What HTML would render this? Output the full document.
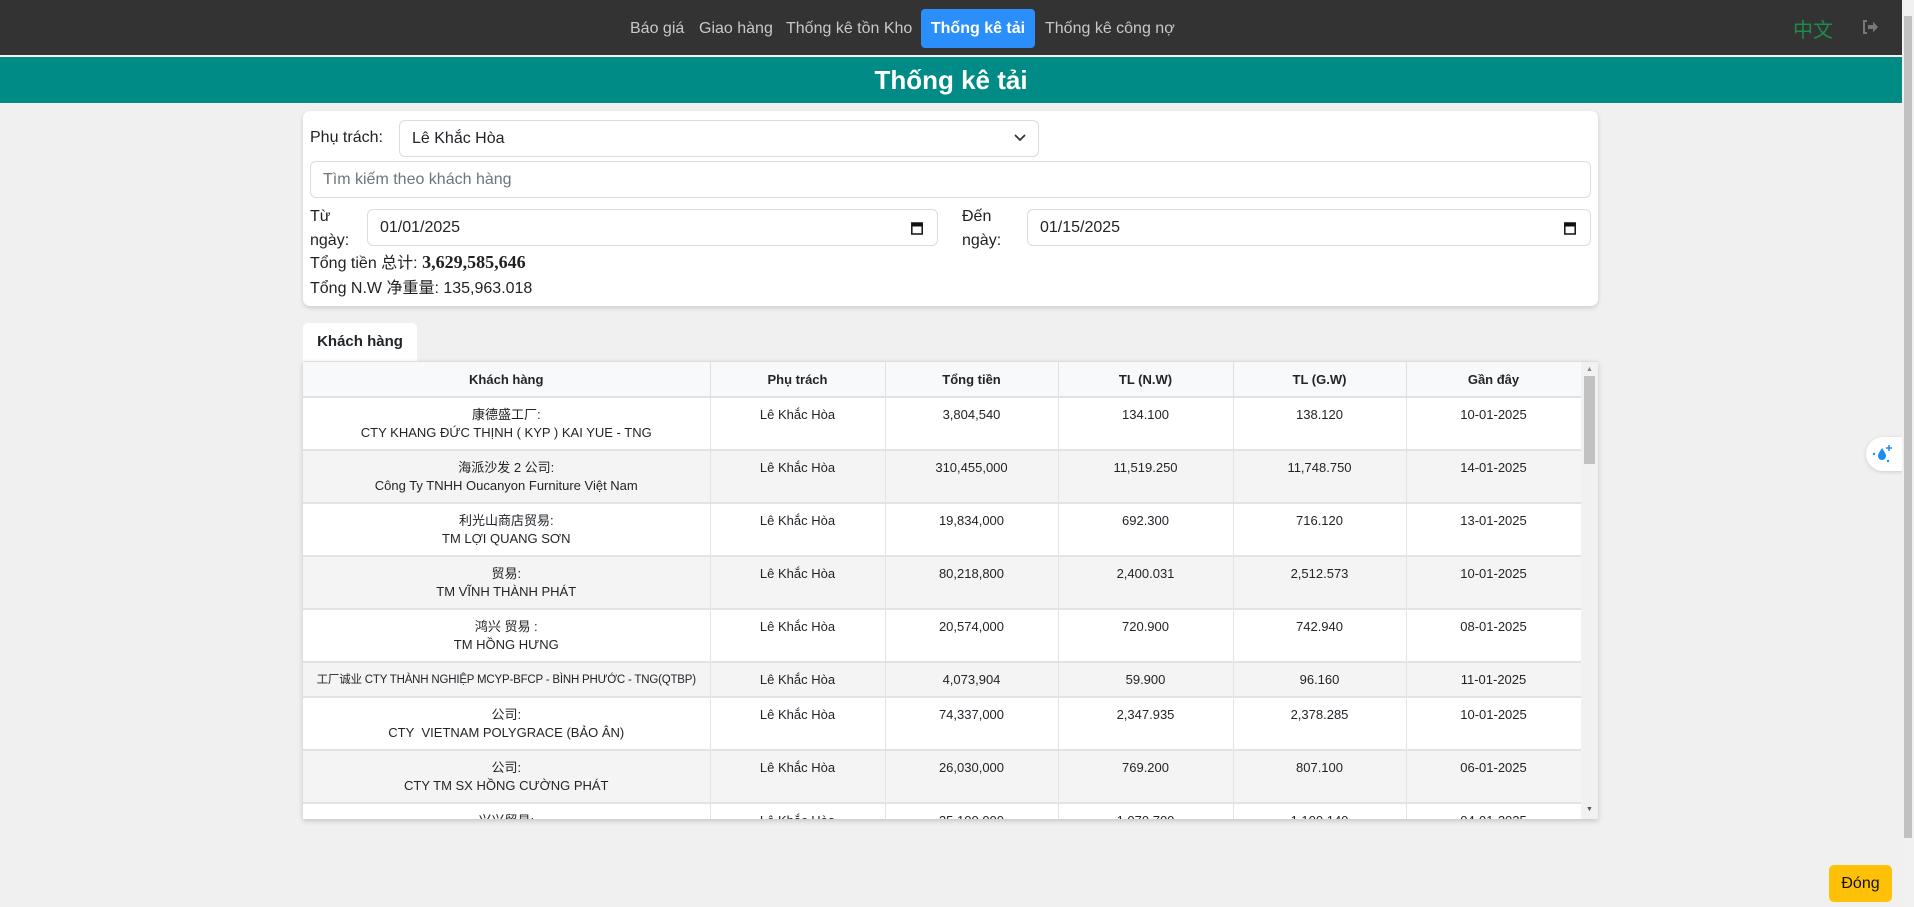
<!DOCTYPE html>
<html><head><meta charset="utf-8">
<style>
*{box-sizing:border-box;margin:0;padding:0}
body{width:1914px;height:907px;overflow:hidden;background:#f0f0f0;font-family:"Liberation Sans","Noto Sans CJK SC",sans-serif;color:#212529;position:relative}
.nav{position:absolute;left:0;top:0;width:1902px;height:55px;background:#333}
.nav a{position:absolute;top:9px;height:39px;line-height:39px;font-size:16px;color:#c8c8c8;text-decoration:none;white-space:nowrap}
.nav a.act{background:#2a8ffa;color:#fff;font-weight:bold;border-radius:4px;padding:0 6px}
.zh{position:absolute;left:1793px;top:14px;font-size:20px;color:#1e8a4c}
.teal{position:absolute;left:0;top:57px;width:1902px;height:46px;background:#008b87;color:#fff;font-weight:bold;font-size:26px;text-align:center;line-height:46px}
.card{position:absolute;left:303px;top:111px;width:1295px;height:195px;background:#fff;border-radius:7px;box-shadow:0 2px 5px rgba(0,0,0,.15)}
.lbl{position:absolute;font-size:16px;color:#222}
.inp{position:absolute;border:1px solid #dcdcdc;border-radius:6px;background:#fff;font-size:16px;padding-left:12px;display:flex;align-items:center}
.tab{position:absolute;left:303px;top:323px;width:114px;height:39px;background:#fff;border-radius:5px 5px 0 0;font-weight:bold;font-size:15px;text-align:center;line-height:38px}
.tw{position:absolute;left:303px;top:361px;width:1295px;height:458px;background:#fff;overflow:hidden;box-shadow:0 2px 5px rgba(0,0,0,.18);border-top:1px solid #ddd}
table{border-collapse:collapse;width:1278px;font-size:13px;table-layout:fixed}
th{background:#f8f9fa;height:35px;font-weight:bold;border-right:1px solid #dee2e6;border-bottom:2px solid #dee2e6}
td{text-align:center;vertical-align:top;padding:8px 4px 7px;line-height:18px;border-right:1px solid #e3e3e3;border-bottom:2px solid #e3e3e3}
tr.g td{background:#f4f4f4}
td.nw{white-space:nowrap;font-size:11.5px;letter-spacing:-0.2px;padding:8px 0 7px}
.sb{position:absolute;left:1278px;top:0;width:17px;height:458px;background:#f1f1f1}
</style></head><body>
<div class="nav">
<a style="left:630px">Báo giá</a>
<a style="left:699px">Giao hàng</a>
<a style="left:786px">Thống kê tồn Kho</a>
<a class="act" style="left:921px;width:114px;text-align:center">Thống kê tải</a>
<a style="left:1045px">Thống kê công nợ</a>
<div class="zh">中文</div>
<svg style="position:absolute;left:1861px;top:19px" width="18" height="16" viewBox="0 0 18 16"><path d="M6 2H3v12h3" fill="none" stroke="#777" stroke-width="2"/><path d="M7 6h5V2.5L17 8l-5 5.5V10H7z" fill="#777"/></svg>
</div>
<div class="teal">Thống kê tải</div>
<div class="card">
<div class="lbl" style="left:7px;top:18px">Phụ trách:</div>
<div class="inp" style="left:96px;top:9px;width:640px;height:37px">Lê Khắc Hòa
<svg style="position:absolute;right:12px;top:13px" width="12" height="8" viewBox="0 0 12 8"><path d="M1 1l5 5 5-5" fill="none" stroke="#333" stroke-width="1.8"/></svg></div>
<div class="inp" style="left:7px;top:50px;width:1281px;height:37px;color:#6c757d">Tìm kiếm theo khách hàng</div>
<div class="lbl" style="left:7px;top:94px;line-height:24px">Từ<br>ngày:</div>
<div class="inp" style="left:64px;top:98px;width:571px;height:37px">01/01/2025
<svg style="position:absolute;right:14px;top:11px" width="12" height="14" viewBox="0 0 12 14"><rect x="0.8" y="2" width="10.4" height="11" fill="none" stroke="#111" stroke-width="1.5"/><rect x="0.8" y="2" width="10.4" height="3.5" fill="#111"/></svg></div>
<div class="lbl" style="left:659px;top:94px;line-height:24px">Đến<br>ngày:</div>
<div class="inp" style="left:724px;top:98px;width:564px;height:37px">01/15/2025
<svg style="position:absolute;right:14px;top:11px" width="12" height="14" viewBox="0 0 12 14"><rect x="0.8" y="2" width="10.4" height="11" fill="none" stroke="#111" stroke-width="1.5"/><rect x="0.8" y="2" width="10.4" height="3.5" fill="#111"/></svg></div>
<div class="lbl" style="left:7px;top:138px">Tổng tiền 总计: <b style="font-family:'Liberation Serif',serif;font-size:18px">3,629,585,646</b></div>
<div class="lbl" style="left:7px;top:163px">Tổng N.W 净重量: 135,963.018</div>
</div>
<div class="tab">Khách hàng</div>
<div class="tw">
<table>
<colgroup><col style="width:407px"><col style="width:175px"><col style="width:173px"><col style="width:175px"><col style="width:173px"><col style="width:175px"></colgroup>
<tr><th>Khách hàng</th><th>Phụ trách</th><th>Tổng tiền</th><th>TL (N.W)</th><th>TL (G.W)</th><th>Gần đây</th></tr>
<tr><td>康德盛工厂:<br>CTY KHANG ĐỨC THỊNH ( KYP ) KAI YUE - TNG</td><td>Lê Khắc Hòa</td><td>3,804,540</td><td>134.100</td><td>138.120</td><td>10-01-2025</td></tr>
<tr class="g"><td>海派沙发 2 公司:<br>Công Ty TNHH Oucanyon Furniture Việt Nam</td><td>Lê Khắc Hòa</td><td>310,455,000</td><td>11,519.250</td><td>11,748.750</td><td>14-01-2025</td></tr>
<tr><td>利光山商店贸易:<br>TM LỢI QUANG SƠN</td><td>Lê Khắc Hòa</td><td>19,834,000</td><td>692.300</td><td>716.120</td><td>13-01-2025</td></tr>
<tr class="g"><td>贸易:<br>TM VĨNH THÀNH PHÁT</td><td>Lê Khắc Hòa</td><td>80,218,800</td><td>2,400.031</td><td>2,512.573</td><td>10-01-2025</td></tr>
<tr><td>鸿兴 贸易 :<br>TM HỒNG HƯNG</td><td>Lê Khắc Hòa</td><td>20,574,000</td><td>720.900</td><td>742.940</td><td>08-01-2025</td></tr>
<tr class="g"><td class="nw">工厂诚业 CTY THÀNH NGHIỆP MCYP-BFCP - BÌNH PHƯỚC - TNG(QTBP)</td><td>Lê Khắc Hòa</td><td>4,073,904</td><td>59.900</td><td>96.160</td><td>11-01-2025</td></tr>
<tr><td>公司:<br>CTY&nbsp; VIETNAM POLYGRACE (BẢO ÂN)</td><td>Lê Khắc Hòa</td><td>74,337,000</td><td>2,347.935</td><td>2,378.285</td><td>10-01-2025</td></tr>
<tr class="g"><td>公司:<br>CTY TM SX HỒNG CƯỜNG PHÁT</td><td>Lê Khắc Hòa</td><td>26,030,000</td><td>769.200</td><td>807.100</td><td>06-01-2025</td></tr>
<tr><td>兴兴贸易:<br>TM</td><td>Lê Khắc Hòa</td><td>35,100,000</td><td>1,070.700</td><td>1,100.140</td><td>04-01-2025</td></tr>
</table>
<div class="sb"><div style="position:absolute;left:3px;top:14px;width:11px;height:88px;background:#c1c1c1"></div>
<div style="position:absolute;left:5px;top:4px;font-size:7px;color:#888">▲</div>
<div style="position:absolute;left:5px;top:444px;font-size:7px;color:#555">▼</div></div>
</div>
<div style="position:absolute;left:1866px;top:437px;width:40px;height:34px;background:#fff;border-radius:17px 0 0 17px;box-shadow:0 1px 4px rgba(0,0,0,.15)">
<svg style="position:absolute;left:6px;top:7px" width="22" height="20" viewBox="0 0 22 20"><path d="M10 4c-2 3-4 6-4 8a4 4 0 008 0c0-2-2-5-4-8z" fill="#1b8ef0"/><path d="M17 1v6M14 4h6" stroke="#1b8ef0" stroke-width="1.5"/><circle cx="2" cy="10" r="1.2" fill="#1b8ef0"/><circle cx="16" cy="17" r="1.2" fill="#1b8ef0"/></svg></div>
<div style="position:absolute;left:1902px;top:0;width:12px;height:907px;background:#f1f1f1"><div style="position:absolute;left:2px;top:16px;width:8px;height:822px;background:#c1c1c1"></div></div>
<div style="position:absolute;left:1829px;top:865px;width:63px;height:37px;background:#ffc107;border-radius:5px;font-size:16px;text-align:center;line-height:37px;color:#111">Đóng</div>
</body></html>
